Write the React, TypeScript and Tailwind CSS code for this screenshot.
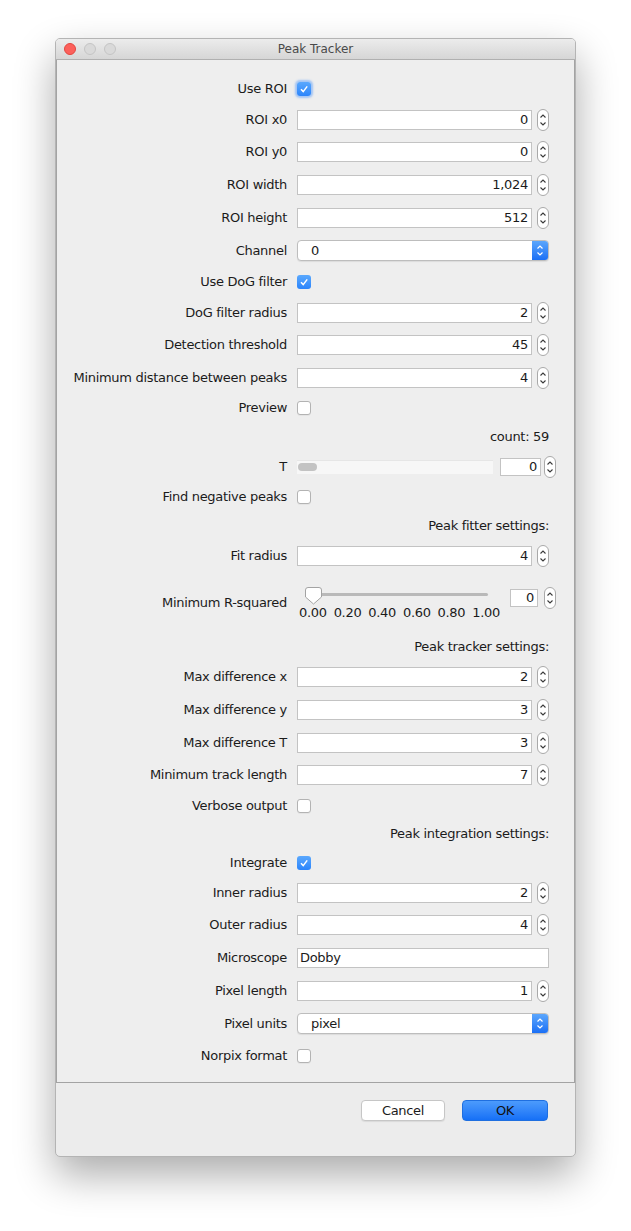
import React from "react";

// small spinner arrows next to a number field
const Spinner = ({ className = "" }: { className?: string }) => (
  <svg width="12" height="22" viewBox="0 0 12 22" className={className}>
    <rect x="0.5" y="0.5" width="11" height="21" rx="5.5" fill="#ffffff" stroke="#a9a9a9" />
    <path d="M3.5 8.5 L6 6 L8.5 8.5" fill="none" stroke="#3a3a3a" strokeWidth="1.1" />
    <path d="M3.5 13.5 L6 16 L8.5 13.5" fill="none" stroke="#3a3a3a" strokeWidth="1.1" />
  </svg>
);

const Check = ({ checked, focus }: { checked?: boolean; focus?: boolean }) =>
  checked ? (
    <div
      className={`flex h-[14px] w-[14px] items-center justify-center rounded-[3px] bg-gradient-to-b from-[#5aa8fd] to-[#2a84fb] ${
        focus ? "shadow-[0_0_2px_2px_rgba(96,160,250,0.55)]" : ""
      }`}
    >
      <svg width="10" height="10" viewBox="0 0 10 10">
        <path d="M2 5.3 L4.2 7.6 L8.2 2.4" fill="none" stroke="#ffffff" strokeWidth="1.5" />
      </svg>
    </div>
  ) : (
    <div className="h-[14px] w-[14px] rounded-[3px] border border-[#b3b3b3] bg-white shadow-[0_1px_0_rgba(0,0,0,0.04)]" />
  );

const NumField = ({ value }: { value: string }) => (
  <div className="flex items-center">
    <div className="h-[20px] w-[235px] border border-[#c3c3c3] bg-white pr-[3px] text-right leading-[18px]">{value}</div>
    <Spinner className="ml-[5px]" />
  </div>
);

const Select = ({ value }: { value: string }) => (
  <div className="flex h-[21px] w-[252px] overflow-hidden rounded-[4px] border border-[#bdbdbd] bg-white shadow-[0_1px_1px_rgba(0,0,0,0.08)]">
    <div className="flex-1 pl-[13px] leading-[19px]">{value}</div>
    <div className="flex w-[16px] items-center justify-center bg-gradient-to-b from-[#5ba6fc] to-[#1a6ff5]">
      <svg width="8" height="13" viewBox="0 0 8 13">
        <path d="M1.5 4.5 L4 2 L6.5 4.5" fill="none" stroke="#ffffff" strokeWidth="1.2" />
        <path d="M1.5 8.5 L4 11 L6.5 8.5" fill="none" stroke="#ffffff" strokeWidth="1.2" />
      </svg>
    </div>
  </div>
);

const Row = ({ h, label, children }: { h: string; label: string; children?: React.ReactNode }) => (
  <div className={`flex items-center ${h}`}>
    <div className="w-[230px] text-right">{label}</div>
    <div className="ml-[10px] flex items-center">{children}</div>
  </div>
);

const Header = ({ h, text }: { h: string; text: string }) => (
  <div className={`flex items-center justify-end pr-[25px] ${h}`}>{text}</div>
);

export default function App() {
  return (
    <div className="h-[1231px] w-[631px] bg-white pl-[55px] pt-[38px] font-['DejaVu_Sans',sans-serif] text-[13px] tracking-[-0.3px] text-[#1b1b1b]">
      <div className="h-[1119px] w-[521px] overflow-hidden rounded-[5px] border border-[#b4b4b4] bg-[#ececec] shadow-[0_18px_40px_rgba(0,0,0,0.33)]">
        {/* title bar */}
        <div className="relative flex h-[21px] items-center border-b border-[#b0b0b0] bg-gradient-to-b from-[#ececec] to-[#d6d6d6]">
          <div className="ml-[8px] flex gap-[8px]">
            <div className="h-[12px] w-[12px] rounded-full border border-[#e2463f] bg-[#fc605b]" />
            <div className="h-[12px] w-[12px] rounded-full border border-[#c4c4c4] bg-[#d9d9d9]" />
            <div className="h-[12px] w-[12px] rounded-full border border-[#c4c4c4] bg-[#d9d9d9]" />
          </div>
          <div className="absolute inset-x-0 text-center text-[12px] tracking-normal text-[#4a4a4a]">Peak Tracker</div>
        </div>

        {/* settings panel */}
        <div className="h-[1023px] border-x border-b border-[#a3a3a3] bg-[#eeeeee] pt-[14px]">
          <Row h="h-[30px]" label="Use ROI">
            <Check checked focus />
          </Row>
          <Row h="h-[31px]" label="ROI x0">
            <NumField value="0" />
          </Row>
          <Row h="h-[33px]" label="ROI y0">
            <NumField value="0" />
          </Row>
          <Row h="h-[33px]" label="ROI width">
            <NumField value="1,024" />
          </Row>
          <Row h="h-[33px]" label="ROI height">
            <NumField value="512" />
          </Row>
          <Row h="h-[33px]" label="Channel">
            <Select value="0" />
          </Row>
          <Row h="h-[30px]" label="Use DoG filter">
            <Check checked />
          </Row>
          <Row h="h-[31px]" label="DoG filter radius">
            <NumField value="2" />
          </Row>
          <Row h="h-[33px]" label="Detection threshold">
            <NumField value="45" />
          </Row>
          <Row h="h-[33px]" label="Minimum distance between peaks">
            <NumField value="4" />
          </Row>
          <Row h="h-[28px]" label="Preview">
            <Check />
          </Row>
          <Header h="h-[29px]" text="count: 59" />
          <Row h="h-[31px]" label="T">
            <div className="flex h-[14px] w-[196px] items-center border-t border-[#e6e6e6] bg-[#f7f7f7]">
              <div className="ml-[1px] h-[8px] w-[19px] rounded-full bg-[#c3c3c3]" />
            </div>
            <div className="ml-[7px] h-[18px] w-[41px] border border-[#c3c3c3] bg-white pr-[3px] text-right leading-[16px]">0</div>
            <Spinner className="ml-[3px]" />
          </Row>
          <Row h="h-[29px]" label="Find negative peaks">
            <Check />
          </Row>
          <Header h="h-[29px]" text="Peak fitter settings:" />
          <Row h="h-[32px]" label="Fit radius">
            <NumField value="4" />
          </Row>

          {/* minimum r-squared slider */}
          <div className="flex h-[60px] items-start">
            <div className="mt-[23px] w-[230px] text-right leading-[16px]">Minimum R-squared</div>
            <div className="ml-[10px] mt-[15px] w-[205px]">
              <div className="relative h-[18px]">
                <div className="absolute left-[9px] top-[6px] h-[3px] w-[182px] rounded-full bg-[#b9b9b9]" />
                <svg width="17" height="18" viewBox="0 0 17 18" className="absolute left-[8px] top-0">
                  <path
                    d="M3 0.5 H14 A2.5 2.5 0 0 1 16.5 3 V10 L8.5 17 L0.5 10 V3 A2.5 2.5 0 0 1 3 0.5 Z"
                    fill="#ffffff"
                    stroke="#a3a3a3"
                  />
                </svg>
              </div>
              <div className="flex justify-between px-[2px] leading-[16px]">
                <span>0.00</span>
                <span>0.20</span>
                <span>0.40</span>
                <span>0.60</span>
                <span>0.80</span>
                <span>1.00</span>
              </div>
            </div>
            <div className="ml-[8px] mt-[17px] h-[18px] w-[28px] border border-[#c3c3c3] bg-white pr-[3px] text-right leading-[16px]">0</div>
            <Spinner className="ml-[6px] mt-[15px]" />
          </div>

          <Header h="h-[29px]" text="Peak tracker settings:" />
          <Row h="h-[32px]" label="Max difference x">
            <NumField value="2" />
          </Row>
          <Row h="h-[33px]" label="Max difference y">
            <NumField value="3" />
          </Row>
          <Row h="h-[33px]" label="Max difference T">
            <NumField value="3" />
          </Row>
          <Row h="h-[32px]" label="Minimum track length">
            <NumField value="7" />
          </Row>
          <Row h="h-[29px]" label="Verbose output">
            <Check />
          </Row>
          <Header h="h-[28px]" text="Peak integration settings:" />
          <Row h="h-[29px]" label="Integrate">
            <Check checked />
          </Row>
          <Row h="h-[31px]" label="Inner radius">
            <NumField value="2" />
          </Row>
          <Row h="h-[33px]" label="Outer radius">
            <NumField value="4" />
          </Row>
          <Row h="h-[33px]" label="Microscope">
            <div className="h-[20px] w-[252px] border border-[#c3c3c3] bg-white pl-[2px] leading-[18px]">Dobby</div>
          </Row>
          <Row h="h-[33px]" label="Pixel length">
            <NumField value="1" />
          </Row>
          <Row h="h-[33px]" label="Pixel units">
            <Select value="pixel" />
          </Row>
          <Row h="h-[31px]" label="Norpix format">
            <Check />
          </Row>
        </div>

        {/* buttons */}
        <div className="flex justify-end gap-[17px] pr-[27px] pt-[17px]">
          <button className="h-[21px] w-[84px] rounded-[4px] border border-[#c6c6c6] bg-white text-center leading-[19px] shadow-[0_1px_1px_rgba(0,0,0,0.08)]">
            Cancel
          </button>
          <button className="h-[21px] w-[86px] rounded-[4px] border border-[#1f6fe0] bg-gradient-to-b from-[#4c9bfc] to-[#1570f6] text-center leading-[19px] text-[#111111]">
            OK
          </button>
        </div>
      </div>
    </div>
  );
}
